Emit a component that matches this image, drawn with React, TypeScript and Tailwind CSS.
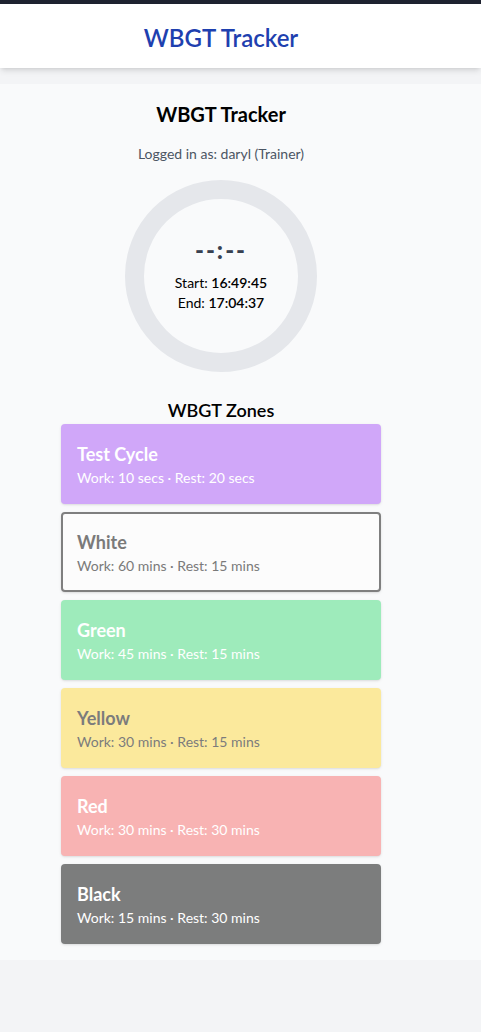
import React from "react";

const zones = [
  { name: "Test Cycle", work: "10 secs", rest: "20 secs", card: "bg-[#d0a7f9] text-white px-4" },
  { name: "White", work: "60 mins", rest: "15 mins", card: "bg-[#fcfcfc] border-2 border-[#7f7f7f] text-[#7a7a7a] px-[14px]" },
  { name: "Green", work: "45 mins", rest: "15 mins", card: "bg-[#9eebbb] text-white px-4" },
  { name: "Yellow", work: "30 mins", rest: "15 mins", card: "bg-[#fbe99c] text-[#7c7c7c] px-4" },
  { name: "Red", work: "30 mins", rest: "30 mins", card: "bg-[#f8b3b3] text-white px-4" },
  { name: "Black", work: "15 mins", rest: "30 mins", card: "bg-[#7c7d7d] text-white px-4" },
];

const App = () => {
  return (
    <div className="min-h-[1032px] bg-[#f3f4f6] font-['Lato',sans-serif]">
      {/* top bar */}
      <div className="h-1 bg-[#1e2230]" />

      {/* header */}
      <header className="h-16 bg-white shadow-md">
        <div className="flex h-full w-[442px] items-center justify-center pt-[3px]">
          <h1 className="text-2xl font-semibold text-[#1e40af]">WBGT Tracker</h1>
        </div>
      </header>

      {/* body */}
      <main className="mt-4 bg-[#f9fafb] pt-4 pb-4">
        <div className="flex w-[442px] flex-col items-center">
          <h2 className="text-xl font-bold leading-7 text-black">WBGT Tracker</h2>
          <p className="mt-4 text-sm leading-5 text-[#4b5563]">Logged in as: daryl (Trainer)</p>

          {/* timer ring */}
          <div className="mt-4 flex h-[192px] w-[192px] flex-col items-center justify-center rounded-full border-[19px] border-[#e5e7eb] pb-[5px]">
            <span className="text-2xl leading-8 font-black tracking-[2px] text-[#374151]">--:--</span>
            <div className="mt-[7px] text-sm leading-5 text-black">
              Start: <span className="font-semibold">16:49:45</span>
            </div>
            <div className="text-sm leading-5 text-black">
              End: <span className="font-semibold">17:04:37</span>
            </div>
          </div>

          <h3 className="mt-6 text-lg leading-7 font-semibold text-black">WBGT Zones</h3>

          {/* zones */}
          <div className="flex w-[320px] flex-col gap-2">
            {zones.map((zone) => (
              <div
                key={zone.name}
                className={`flex h-20 flex-col justify-center rounded shadow-sm ${zone.card}`}
              >
                <span className="text-lg leading-7 font-bold">{zone.name}</span>
                <span className="text-sm leading-5">
                  Work: {zone.work} · Rest: {zone.rest}
                </span>
              </div>
            ))}
          </div>
        </div>
      </main>
    </div>
  );
};

export default App;
